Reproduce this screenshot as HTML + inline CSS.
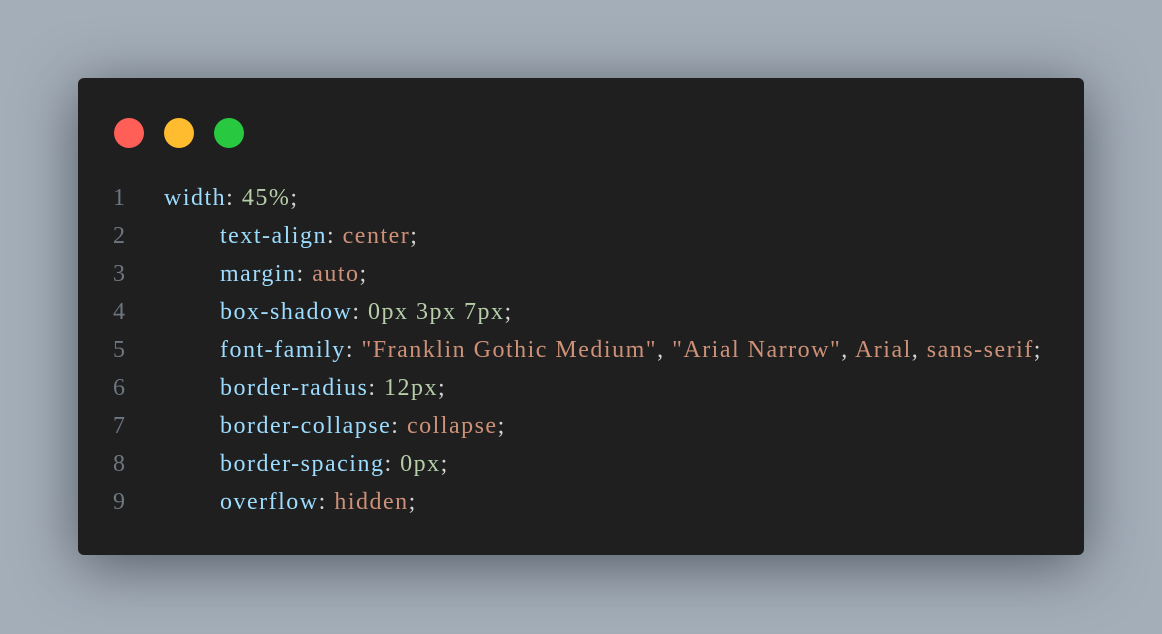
<!DOCTYPE html>
<html><head><style>
html,body{margin:0;padding:0}
body{width:1162px;height:634px;background:#a4aeb9;position:relative;overflow:hidden;font-family:"Liberation Serif",serif}
.card{position:absolute;left:78px;top:78px;width:1006px;height:477px;background:#1f1f1f;border-radius:6px;box-shadow:0 10px 60px rgba(30,35,45,.6)}
.dot{position:absolute;top:40px;width:30px;height:30px;border-radius:50%}
.l{position:absolute;left:0;top:0;height:38px;line-height:38px;font-size:24px;white-space:pre;color:#d4d4d4;letter-spacing:1.5px}
.n{position:absolute;left:35px;color:#6e7681;letter-spacing:0}
.c{position:absolute;left:86px}
.i{left:142px}
.p{color:#9cdcfe}.v{color:#ce9178}.num{color:#b5cea8}
</style></head><body>
<div class="card">
<div class="dot" style="left:36px;background:#ff5f57"></div>
<div class="dot" style="left:86px;background:#febc2e"></div>
<div class="dot" style="left:136px;background:#28c840"></div>
<div class="l" style="top:101px"><span class="n">1</span><span class="c"><span class="p">width</span>: <span class="num">45%</span>;</span></div>
<div class="l" style="top:139px"><span class="n">2</span><span class="c i"><span class="p">text-align</span>: <span class="v">center</span>;</span></div>
<div class="l" style="top:177px"><span class="n">3</span><span class="c i"><span class="p">margin</span>: <span class="v">auto</span>;</span></div>
<div class="l" style="top:215px"><span class="n">4</span><span class="c i"><span class="p">box-shadow</span>: <span class="num">0px 3px 7px</span>;</span></div>
<div class="l" style="top:253px"><span class="n">5</span><span class="c i"><span class="p">font-family</span>: <span class="v">"Franklin Gothic Medium"</span>, <span class="v">"Arial Narrow"</span>, <span class="v">Arial</span>, <span class="v">sans-serif</span>;</span></div>
<div class="l" style="top:291px"><span class="n">6</span><span class="c i"><span class="p">border-radius</span>: <span class="num">12px</span>;</span></div>
<div class="l" style="top:329px"><span class="n">7</span><span class="c i"><span class="p">border-collapse</span>: <span class="v">collapse</span>;</span></div>
<div class="l" style="top:367px"><span class="n">8</span><span class="c i"><span class="p">border-spacing</span>: <span class="num">0px</span>;</span></div>
<div class="l" style="top:405px"><span class="n">9</span><span class="c i"><span class="p">overflow</span>: <span class="v">hidden</span>;</span></div>
</div>
</body></html>
